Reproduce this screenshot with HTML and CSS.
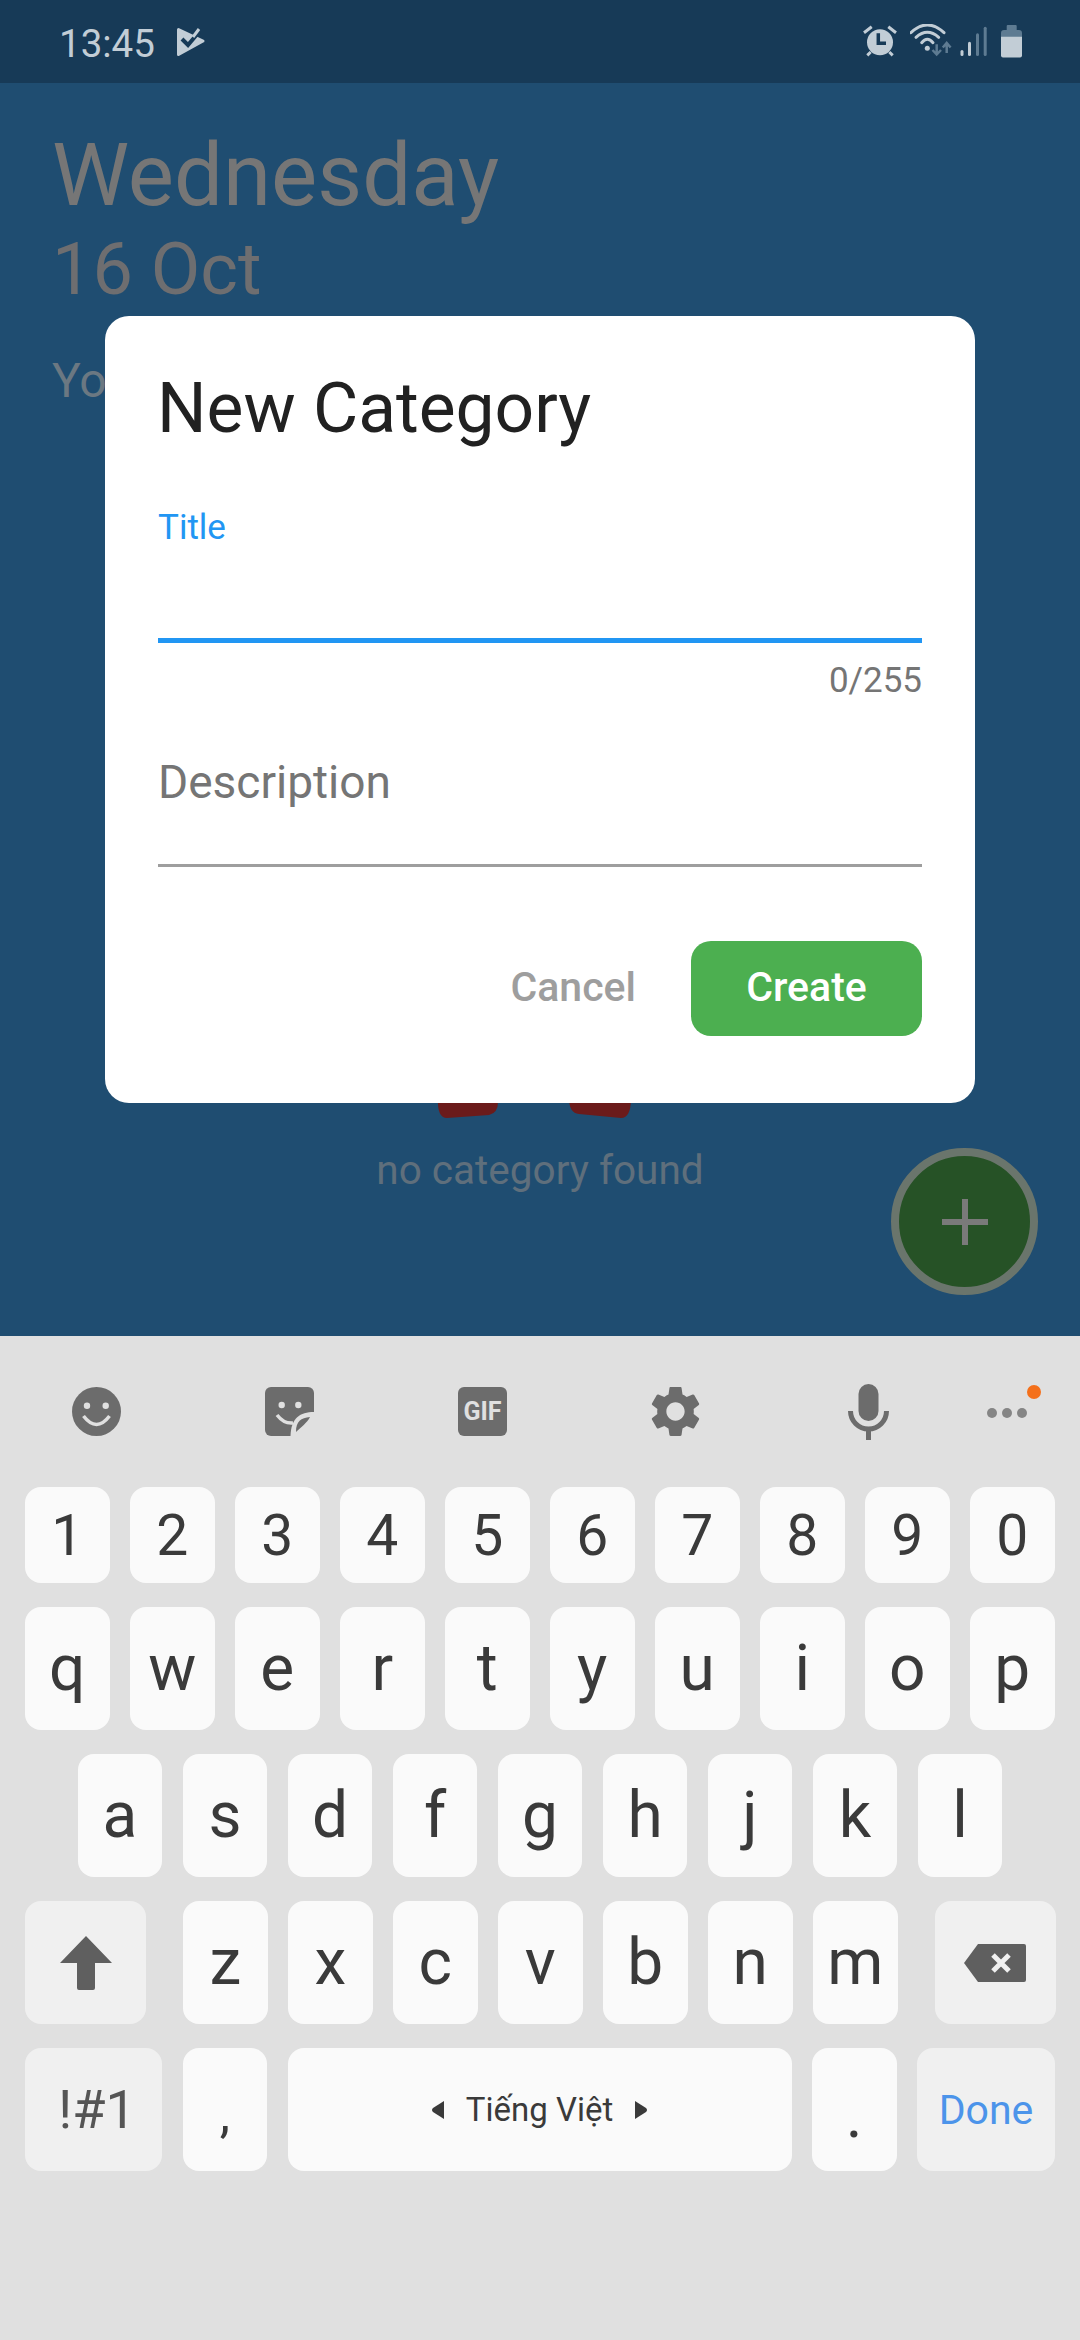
FILE: index.html
```html
<!DOCTYPE html>
<html lang="en">

<head>
  <meta charset="UTF-8">
  <meta name="viewport" content="width=device-width, initial-scale=1.0">
  <title>New Category</title>
  <link rel="stylesheet" href="styles.css">
</head>

<body>
  <div class="phone">
    <header class="status">
      <div class="status-left">
        <span class="clock">13:45</span>
        <svg class="status-icon" width="28" height="30" viewBox="0 0 28 30">
          <path d="M1.5 2.5 L26 14 L1.5 27.5 Z" fill="#c2cdd6" stroke="#c2cdd6" stroke-width="3" stroke-linejoin="round"></path>
          <path d="M5 12 L11 18 L22 5" fill="none" stroke="#173a57" stroke-width="4"></path>
          <path d="M16 10 L22 2" fill="none" stroke="#c2cdd6" stroke-width="3"></path>
        </svg>
      </div>
      <div class="status-right">
        <svg width="40" height="36" viewBox="0 0 40 36">
          <circle cx="18" cy="18.3" r="13" fill="#c2cdd6"></circle>
          <path d="M2 8.7 L9.7 2.7 M34 8.7 L26.3 2.7 M5.3 31.3 L8.7 28 M30.7 31.3 L27.3 28" stroke="#c2cdd6" stroke-width="3" fill="none"></path>
          <path d="M16.3 9.3 V19.3 H24" stroke="#173a57" stroke-width="3.5" fill="none"></path>
        </svg>
        <svg width="42" height="36" viewBox="0 0 42 36">
          <g fill="none" stroke="#c2cdd6" stroke-width="3" stroke-linecap="round">
            <path d="M.9 8.7 Q17.3 -6.7 34 8.7"></path>
            <path d="M6 13.3 Q17.3 3.3 28.7 13.3"></path>
            <path d="M11.7 18.7 Q17.3 11.9 23 18.7"></path>
          </g>
          <circle cx="17.3" cy="24.3" r="2.5" fill="#c2cdd6"></circle>
          <path d="M26.7 20.3 V30 M22.5 26 L26.7 30.5 L31 26 M36.7 29 V19.5 M32.8 23.5 L36.7 19 L40.6 23.5" fill="none" stroke="#5e7b92" stroke-width="2.5"></path>
        </svg>
        <svg width="27" height="36" viewBox="0 0 27 36">
          <rect x="0.5" y="26" width="3" height="6" rx="1.5" fill="#c2cdd6"></rect>
          <rect x="8" y="17.7" width="3" height="14.3" rx="1.5" fill="#c2cdd6"></rect>
          <rect x="16" y="9.3" width="3" height="22.7" rx="1.5" fill="#5e7b92"></rect>
          <rect x="23.7" y="2.7" width="3" height="29.3" rx="1.5" fill="#5e7b92"></rect>
        </svg>
        <svg width="27" height="36" viewBox="-6 0 27 36">
          <path d="M5.7 6 V2 Q5.7 1 6.7 1 H14.7 Q15.7 1 15.7 2 V6 H18 Q21 6 21 9 V13 H0 V9 Q0 6 3 6 Z" fill="#5e7b92"></path>
          <path d="M0 12.7 H21 V31.5 Q21 33.5 19 33.5 H2 Q0 33.5 0 31.5 Z" fill="#c2cdd6"></path>
        </svg>
      </div>
    </header>

    <main class="app">
      <h1 class="day">Wednesday</h1>
      <h2 class="date">16 Oct</h2>
      <p class="summary">Yo</p>

      <div class="empty">
        <svg class="feet" width="206" height="20" viewBox="0 0 206 20">
          <path d="M1 0 Q0 20 10 20 L52 17 Q61 15 61 4 L61 0 Z" fill="#6b1b1b"></path>
          <path d="M132 0 Q132 15 142 16 L184 20 Q194 20 194 0 Z" fill="#6b1b1b"></path>
        </svg>
        <p class="empty-text">no category found</p>
      </div>

      <button class="fab" type="button">
        <svg width="46" height="46" viewBox="0 0 46 46">
          <path d="M23 0 V46 M0 23 H46" stroke="#7a7a7a" stroke-width="6"></path>
        </svg>
      </button>

      <section class="dialog">
        <h3 class="dialog-title">New Category</h3>
        <div class="field field-active">
          <span class="field-label">Title</span>
        </div>
        <div class="counter">0/255</div>
        <div class="field field-idle">
          <span class="field-hint">Description</span>
        </div>
        <div class="actions">
          <button class="btn-cancel" type="button">Cancel</button>
          <button class="btn-create" type="button">Create</button>
        </div>
      </section>
    </main>

    <section class="keyboard">
      <div class="toolbar">
        <div class="tool">
          <svg width="49" height="49" viewBox="0 0 49 49">
            <circle cx="24.5" cy="24.5" r="24.5" fill="#6c6c6c"></circle>
            <circle cx="15" cy="18.7" r="3.2" fill="#e0e0e0"></circle>
            <circle cx="33.7" cy="18.7" r="3.2" fill="#e0e0e0"></circle>
            <path d="M11.5 29 Q24.5 46 37.5 29" fill="none" stroke="#e0e0e0" stroke-width="3.5"></path>
          </svg>
        </div>
        <div class="tool">
          <svg width="49" height="49" viewBox="0 0 49 49">
            <rect width="49" height="49" rx="6" fill="#6c6c6c"></rect>
            <path d="M25.5 49 C26 31 35 25 49 25 V49 Z" fill="#e0e0e0"></path>
            <path d="M31 45 C31 34 36 31 45 30 C42 36 36 40 31 45 Z" fill="#6c6c6c"></path>
            <circle cx="16.7" cy="18" r="3.2" fill="#e0e0e0"></circle>
            <circle cx="33.3" cy="18" r="3.2" fill="#e0e0e0"></circle>
            <path d="M12 28 Q19 37 28 36" fill="none" stroke="#e0e0e0" stroke-width="3.5"></path>
          </svg>
        </div>
        <div class="tool">
          <div class="gif">GIF</div>
        </div>
        <div class="tool">
          <svg width="61" height="61" viewBox="0 0 24 24">
            <path fill="#6c6c6c" d="M19.14 12.94c.04-.3.06-.61.06-.94 0-.32-.02-.64-.07-.94l2.03-1.58c.18-.14.23-.41.12-.61l-1.92-3.32c-.12-.22-.37-.29-.59-.22l-2.39.96c-.5-.38-1.03-.7-1.62-.94l-.36-2.54c-.04-.24-.24-.41-.48-.41h-3.84c-.24 0-.43.17-.47.41l-.36 2.54c-.59.24-1.13.57-1.62.94l-2.39-.96c-.22-.08-.47 0-.59.22L2.74 8.87c-.12.21-.08.47.12.61l2.03 1.58c-.05.3-.09.63-.09.94s.02.64.07.94l-2.03 1.58c-.18.14-.23.41-.12.61l1.92 3.32c.12.22.37.29.59.22l2.39-.96c.5.38 1.03.7 1.62.94l.36 2.54c.05.24.24.41.48.41h3.84c.24 0 .44-.17.47-.41l.36-2.54c.59-.24 1.13-.56 1.62-.94l2.39.96c.22.08.47 0 .59-.22l1.92-3.32c.12-.22.07-.47-.12-.61l-2.01-1.58zM12 15.6c-1.98 0-3.6-1.62-3.6-3.6s1.62-3.6 3.6-3.6 3.6 1.62 3.6 3.6-1.62 3.6-3.6 3.6z"></path>
          </svg>
        </div>
        <div class="tool">
          <svg width="41" height="56" viewBox="0 0 41 56">
            <rect x="10.5" y="0" width="20" height="37" rx="10" fill="#6c6c6c"></rect>
            <path d="M2.5 27 a18 18 0 0 0 36 0" fill="none" stroke="#6c6c6c" stroke-width="5"></path>
            <rect x="18" y="45" width="5" height="11" fill="#6c6c6c"></rect>
          </svg>
        </div>
        <div class="tool tool-more">
          <svg width="62" height="40" viewBox="0 0 62 40">
            <circle cx="5" cy="28" r="5" fill="#858585"></circle>
            <circle cx="20" cy="28" r="5" fill="#858585"></circle>
            <circle cx="35" cy="28" r="5" fill="#858585"></circle>
            <circle cx="47" cy="7" r="7" fill="#f4701b"></circle>
          </svg>
        </div>
      </div>

      <div class="rows">
        <div class="row row-digits">
          <div class="key">1</div>
          <div class="key">2</div>
          <div class="key">3</div>
          <div class="key">4</div>
          <div class="key">5</div>
          <div class="key">6</div>
          <div class="key">7</div>
          <div class="key">8</div>
          <div class="key">9</div>
          <div class="key">0</div>
        </div>
        <div class="row">
          <div class="key">q</div>
          <div class="key">w</div>
          <div class="key">e</div>
          <div class="key">r</div>
          <div class="key">t</div>
          <div class="key">y</div>
          <div class="key">u</div>
          <div class="key">i</div>
          <div class="key">o</div>
          <div class="key">p</div>
        </div>
        <div class="row row-center">
          <div class="key">a</div>
          <div class="key">s</div>
          <div class="key">d</div>
          <div class="key">f</div>
          <div class="key">g</div>
          <div class="key">h</div>
          <div class="key">j</div>
          <div class="key">k</div>
          <div class="key">l</div>
        </div>
        <div class="row">
          <div class="key key-fn key-shift">
            <svg width="52" height="54" viewBox="0 0 52 54">
              <path d="M26 0 L52 27 H35 V52 Q35 54 33 54 H19 Q17 54 17 52 V27 H0 Z" fill="#5f5f5f"></path>
            </svg>
          </div>
          <div class="key">z</div>
          <div class="key">x</div>
          <div class="key">c</div>
          <div class="key">v</div>
          <div class="key">b</div>
          <div class="key">n</div>
          <div class="key">m</div>
          <div class="key key-fn key-back">
            <svg width="62" height="38" viewBox="0 0 62 38">
              <path d="M14 0 H60 Q62 0 62 2 V36 Q62 38 60 38 H14 L0 19 Z" fill="#5f5f5f"></path>
              <path d="M29 11 L45 27 M45 11 L29 27" stroke="#f0f0f0" stroke-width="5"></path>
            </svg>
          </div>
        </div>
        <div class="row">
          <div class="key key-fn key-sym">!#1</div>
          <div class="key key-comma">,</div>
          <div class="key key-space">
            <svg width="13" height="18" viewBox="0 0 13 18">
              <path d="M13 0 V18 L2 11 Q0 9 2 7 Z" fill="#3a3a3a"></path>
            </svg>
            <span>Tiếng Việt</span>
            <svg width="13" height="18" viewBox="0 0 13 18">
              <path d="M0 0 V18 L11 11 Q13 9 11 7 Z" fill="#3a3a3a"></path>
            </svg>
          </div>
          <div class="key key-dot">.</div>
          <div class="key key-fn key-done">Done</div>
        </div>
      </div>
    </section>
  </div>
</body>

</html>
```

FILE: styles.css
```css
:root {
  --status-bg: #173a57;
  --app-bg: #1f4d71;
  --status-fg: #c2cdd6;
  --blue: #2196f3;
  --green: #4caf50;
  --kb-bg: #e0e0e0;
  --key: #fafafa;
  --key-fn: #f0f0f0;
  --key-text: #3a3a3a;
}

* {
  box-sizing: border-box;
}

body {
  margin: 0;
  font-family: Roboto, "Noto Sans", sans-serif;
}

.phone {
  display: flex;
  flex-direction: column;
  width: 1080px;
  height: 2340px;
  overflow: hidden;
}

/* status bar */
.status {
  flex: 0 0 83px;
  display: flex;
  align-items: center;
  justify-content: space-between;
  padding: 0 58px 0 59px;
  background: var(--status-bg);
  color: var(--status-fg);
}

.status-left {
  display: flex;
  align-items: center;
  gap: 22px;
}

.clock {
  font-size: 38.5px;
  padding-top: 4px;
}

.status-right {
  display: flex;
  align-items: center;
  gap: 8px;
}

/* app behind the dialog */
.app {
  flex: 1;
  position: relative;
  padding: 42px 0 0 52px;
  background: var(--app-bg);
}

.day {
  margin: 0;
  font-size: 87px;
  font-weight: 400;
  line-height: 101px;
  color: #767676;
}

.date {
  margin: 2px 0 0;
  font-size: 72px;
  font-weight: 400;
  line-height: 84px;
  color: #6e6e70;
}

.summary {
  margin: 39px 0 0;
  font-size: 48px;
  line-height: 60px;
  color: #6b7882;
}

.empty {
  display: flex;
  flex-direction: column;
  align-items: center;
  margin: 687px 0 0 -52px;
}

.feet {
  display: block;
}

.empty-text {
  margin: 27px 0 0;
  font-size: 40.5px;
  line-height: 50px;
  color: #5f6f7c;
}

.fab {
  position: absolute;
  right: 42px;
  bottom: 41px;
  display: flex;
  align-items: center;
  justify-content: center;
  width: 147px;
  height: 147px;
  padding: 0;
  border: 8px solid #6a756c;
  border-radius: 50%;
  background: #265226;
}

/* dialog */
.dialog {
  position: absolute;
  top: 233px;
  left: 105px;
  width: 870px;
  padding: 53px 53px 67px;
  border-radius: 24px;
  background: #fff;
}

.dialog-title {
  margin: 0 0 0 -1px;
  font-size: 69.5px;
  font-weight: 400;
  line-height: 80px;
  color: #212121;
}

.field-active {
  height: 137px;
  margin-top: 57px;
  border-bottom: 5px solid var(--blue);
}

.field-label {
  display: block;
  font-size: 35px;
  line-height: 44px;
  color: var(--blue);
}

.counter {
  margin-top: 16px;
  font-size: 35px;
  line-height: 44px;
  text-align: right;
  color: #757575;
}

.field-idle {
  margin-top: 51px;
  padding-bottom: 54px;
  border-bottom: 3px solid #9e9e9e;
}

.field-hint {
  display: block;
  font-size: 46px;
  line-height: 56px;
  color: #757575;
}

.actions {
  display: flex;
  align-items: center;
  justify-content: flex-end;
  gap: 55px;
  margin-top: 74px;
}

.actions button {
  padding: 0 0 4px;
  border: none;
  font-family: inherit;
  font-size: 41px;
  font-weight: 500;
}

.btn-cancel {
  background: none;
  color: #9e9e9e;
}

.btn-create {
  width: 231px;
  height: 95px;
  border-radius: 20px;
  background: var(--green);
  color: #fff;
}

/* keyboard */
.keyboard {
  flex: 0 0 1004px;
  background: var(--kb-bg);
}

.toolbar {
  display: flex;
  align-items: center;
  height: 151px;
}

.tool {
  flex: 0 0 193px;
  display: flex;
  align-items: center;
  justify-content: center;
}

.tool-more {
  flex: 0 0 115px;
  justify-content: flex-start;
  padding: 0 0 14px 22px;
}

.gif {
  display: flex;
  align-items: center;
  justify-content: center;
  width: 49px;
  height: 49px;
  border-radius: 6px;
  background: #6c6c6c;
  color: var(--kb-bg);
  font-size: 25px;
  font-weight: 700;
}

.rows {
  display: flex;
  flex-direction: column;
  gap: 24px;
  padding: 0 25px;
}

.row {
  display: flex;
  gap: 20.5px;
  height: 123px;
}

.row-digits {
  height: 96px;
}

.row-center {
  justify-content: center;
}

.key {
  flex: 0 0 84.5px;
  display: flex;
  align-items: center;
  justify-content: center;
  border-radius: 16px;
  background: var(--key);
  color: var(--key-text);
  font-size: 64px;
}

.row-digits .key {
  font-size: 57px;
}

.key-fn {
  background: var(--key-fn);
}

.key-shift,
.key-back {
  flex-basis: 121px;
}

.key-shift {
  margin-right: 16.5px;
}

.key-back {
  margin-left: 16.5px;
}

.key-sym {
  flex-basis: 137px;
  padding-left: 7px;
  font-size: 54px;
  color: #555;
}

.key-comma {
  padding-top: 10px;
  font-size: 52px;
}

.key-space {
  flex-basis: 504px;
  gap: 22px;
  font-size: 33px;
}

.key-dot {
  padding-top: 12px;
}

.key-done {
  flex-basis: 138px;
  font-size: 41px;
  color: #4c94ea;
}
```
